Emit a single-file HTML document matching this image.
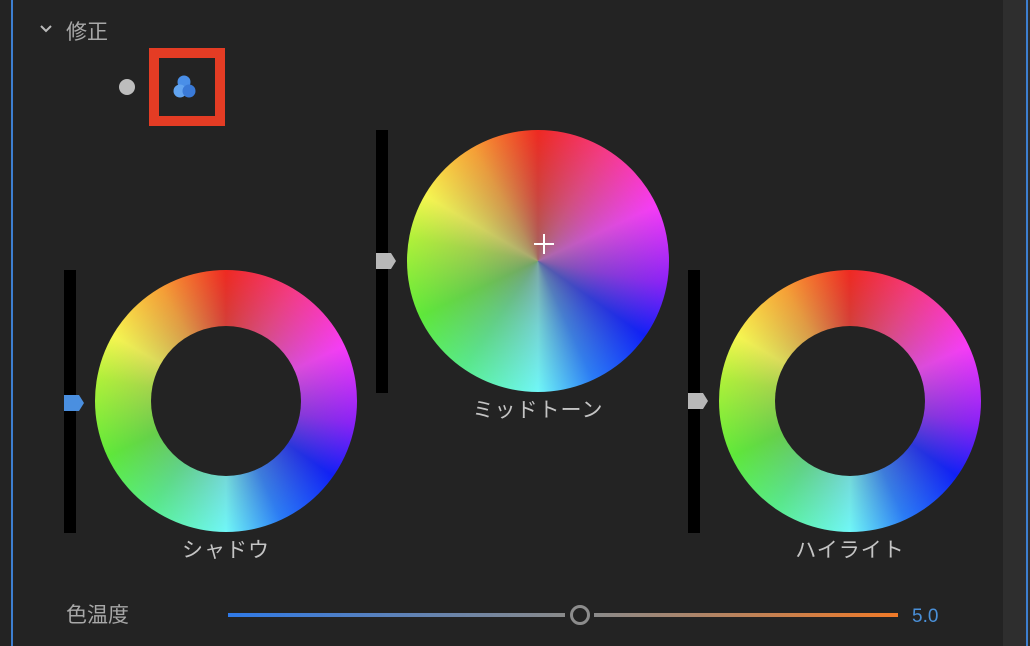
<!DOCTYPE html>
<html><head><meta charset="utf-8"><style>
body{margin:0;width:1030px;height:646px;background:#232323;position:relative;overflow:hidden;font-family:"Liberation Sans","Noto Sans CJK JP",sans-serif;color:#bdbdbd}
.a{position:absolute}
.wheel{position:absolute;width:262px;height:262px;border-radius:50%;
background:conic-gradient(from 0deg,#ee2a22 0deg,#f43a82 30deg,#f63cf6 65deg,#8a22f6 100deg,#1020f6 125deg,#2a7cf6 155deg,#70f6f6 180deg,#58ea8a 215deg,#5ee83a 245deg,#b0f03a 280deg,#f6f650 300deg,#f6a036 330deg,#ee2a22 360deg)}
.wheel::after{content:"";position:absolute;inset:0;border-radius:50%;background:radial-gradient(circle,rgba(128,128,128,.7) 0%,rgba(128,128,128,.3) 35%,rgba(128,128,128,0) 70%)}
.hole{position:absolute;width:150px;height:150px;border-radius:50%;background:#232323;left:56px;top:56px;z-index:2}
.bar{position:absolute;width:12px;background:#000}
.thumb{position:absolute;width:20px;height:16px;clip-path:polygon(0 0,75% 0,100% 50%,75% 100%,0 100%)}
.lbl{position:absolute;font-size:21px;color:#c4c4c4;transform:translateX(-50%);white-space:nowrap;letter-spacing:1px}
</style></head><body>
<div class="a" style="left:11px;top:0;width:2px;height:646px;background:#3d7fd0"></div>
<div class="a" style="left:1003px;top:0;width:27px;height:646px;background:#2e2e2e"></div>
<div class="a" style="left:1026px;top:0;width:2px;height:646px;background:#3d7fd0"></div>
<svg class="a" style="left:39px;top:24px" width="14" height="10"><path d="M2 2 L7 7 L12 2" stroke="#bbb" stroke-width="2" fill="none"/></svg>
<div class="a" style="left:66px;top:16px;font-size:21px;color:#a8a8a8">修正</div>
<div class="a" style="left:119px;top:79px;width:16px;height:16px;border-radius:50%;background:#bdbdbd"></div>
<div class="a" style="left:149px;top:48px;width:56px;height:58px;border:10px solid #e43c24"></div>
<svg class="a" style="left:170px;top:72px" width="30" height="30"><circle cx="14" cy="10" r="6.5" fill="#4a8fe8"/><circle cx="10" cy="19" r="6.5" fill="#62a4f0"/><circle cx="19" cy="19" r="6.5" fill="#3a7ad8"/></svg>

<div class="bar" style="left:64px;top:270px;height:263px"></div>
<div class="thumb" style="left:64px;top:395px;background:#4a8fe0"></div>
<div class="wheel" style="left:95px;top:270px"><div class="hole"></div></div>
<div class="lbl" style="left:226px;top:534px">シャドウ</div>

<div class="bar" style="left:376px;top:130px;height:263px"></div>
<div class="thumb" style="left:376px;top:253px;background:#b8b8b8"></div>
<div class="wheel" style="left:407px;top:130px"></div>
<svg class="a" style="left:533px;top:233px;z-index:3" width="22" height="22"><path d="M11 1V21M1 11H21" stroke="#fff" stroke-width="2"/></svg>
<div class="lbl" style="left:538px;top:394px">ミッドトーン</div>

<div class="bar" style="left:688px;top:270px;height:263px"></div>
<div class="thumb" style="left:688px;top:393px;background:#b8b8b8"></div>
<div class="wheel" style="left:719px;top:270px"><div class="hole"></div></div>
<div class="lbl" style="left:850px;top:534px">ハイライト</div>

<div class="a" style="left:66px;top:599px;font-size:21px;color:#a8a8a8">色温度</div>
<div class="a" style="left:228px;top:613px;width:337px;height:4px;background:linear-gradient(90deg,#2f7ae8,#8a8a8a)"></div>
<div class="a" style="left:594px;top:613px;width:304px;height:4px;background:linear-gradient(90deg,#8a8a8a,#f07a28)"></div>
<div class="a" style="left:570px;top:605px;width:14px;height:14px;border:3px solid #8c8c8c;border-radius:50%"></div>
<div class="a" style="left:912px;top:606px;font-size:19px;color:#4a90d9">5.0</div>
</body></html>
